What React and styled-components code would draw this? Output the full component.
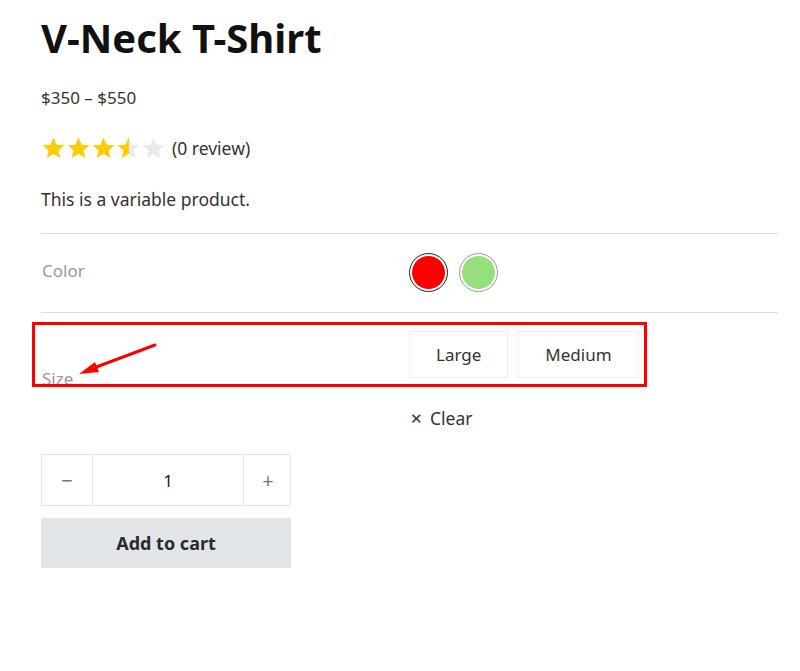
import React from "react";
import styled, { createGlobalStyle } from "styled-components";

const Global = createGlobalStyle`
  * { box-sizing: border-box; }
  body {
    margin: 0;
    background: #fff;
    font-family: "Noto Sans", "Open Sans", sans-serif;
    color: #333;
  }
`;

const Page = styled.div`
  width: 800px;
  padding: 14px 22px 0 41px;
`;

const Title = styled.h1`
  margin: 0;
  font-size: 40px;
  font-weight: 700;
  color: #111;
  line-height: 48px;
`;

const Price = styled.p`
  margin: 25px 0 0;
  font-size: 17px;
  line-height: 22px;
`;

const RatingRow = styled.div`
  display: flex;
  align-items: center;
  gap: 6px;
  margin-top: 27px;
  font-size: 17.5px;
`;

const Stars = styled.div`
  display: flex;
`;

const Desc = styled.p`
  margin: 28px 0 0;
  font-size: 17.5px;
  line-height: 22px;
`;

const Variations = styled.div`
  margin-top: 23px;
  border-top: 1px solid #ddd;
  position: relative;
`;

const VarRow = styled.div`
  display: grid;
  grid-template-columns: 368px 1fr;
  align-items: ${(p) => p.$align || "center"};
  border-bottom: ${(p) => (p.$line ? "1px solid #ddd" : "none")};
  padding: ${(p) => p.$pad};
`;

const Label = styled.div`
  color: #999;
  font-size: 17px;
  padding-left: 1px;
  line-height: 20px;
  margin-bottom: ${(p) => p.$drop || 0}px;
`;

const Options = styled.div`
  display: flex;
  gap: ${(p) => p.$gap}px;
`;

const Swatch = styled.span`
  width: 39px;
  height: 39px;
  border-radius: 50%;
  border: 1px solid ${(p) => (p.$active ? "#222" : "#999")};
  padding: 2px;
  display: flex;
  &::after {
    content: "";
    flex: 1;
    border-radius: 50%;
    background: ${(p) => p.$color};
  }
`;

const SizeBtn = styled.button`
  height: 47px;
  padding: 0 ${(p) => p.$px}px;
  background: #fff;
  border: 1px solid #eee;
  font: inherit;
  font-size: 17px;
  color: #333;
`;

const ClearRow = styled.div`
  padding: 28px 0 0 369px;
  font-size: 17.5px;
  line-height: 24px;
  display: flex;
  align-items: center;
  gap: 7px;
  color: #333;
`;

const Annot = styled.div`
  position: absolute;
  left: -9px;
  top: 88px;
  width: 615px;
  height: 65px;
  border: 3px solid #f00;
  pointer-events: none;
`;

const Arrow = styled.svg`
  position: absolute;
  left: -12px;
  top: 100px;
  pointer-events: none;
`;

const Qty = styled.div`
  display: grid;
  grid-template-columns: 50px 151px 49px;
  width: 250px;
  height: 52px;
  margin-top: 24px;
  border: 1px solid #e2e2e2;
`;

const QtyCell = styled.div`
  display: flex;
  align-items: center;
  justify-content: center;
  font-size: ${(p) => (p.$sign ? 20 : 17)}px;
  color: ${(p) => (p.$sign ? "#777" : "#222")};
  border-left: ${(p) => (p.$first ? "none" : "1px solid #e2e2e2")};
`;

const CartBtn = styled.button`
  display: block;
  width: 250px;
  height: 50px;
  margin-top: 12px;
  border: none;
  background: #e3e6e9;
  font: inherit;
  font-size: 18px;
  font-weight: 700;
  color: #2b2b2b;
`;

const Star = ({ fill }) => {
  const id = "g" + Math.random().toString(36).slice(2);
  return (
    <svg width="25" height="24" viewBox="0 0 24 24">
      <defs>
        <linearGradient id={id}>
          <stop offset={fill} stopColor="#fccb0a" />
          <stop offset={fill} stopColor="#eaeaea" />
        </linearGradient>
      </defs>
      <path
        d="M12 1.5l3.1 7.2 7.8.6-5.9 5.1 1.8 7.6L12 17.9 5.2 22l1.8-7.6L1.1 9.3l7.8-.6z"
        fill={`url(#${id})`}
      />
    </svg>
  );
};

export default function App() {
  return (
    <Page>
      <Global />
      <Title>V-Neck T-Shirt</Title>
      <Price>$350 – $550</Price>
      <RatingRow>
        <Stars>
          {[1, 1, 1, 0.5, 0].map((f, i) => (
            <Star key={i} fill={f} />
          ))}
        </Stars>
        <span>(0 review)</span>
      </RatingRow>
      <Desc>This is a variable product.</Desc>
      <Variations>
        <VarRow $line $pad="19px 0 20px">
          <Label $drop={3}>Color</Label>
          <Options $gap={11}>
            <Swatch $active $color="#ff0000" />
            <Swatch $color="#95e07c" />
          </Options>
        </VarRow>
        <VarRow $align="end" $pad="18px 0 0">
          <Label $drop={-11}>Size</Label>
          <Options $gap={10}>
            <SizeBtn $px={26}>Large</SizeBtn>
            <SizeBtn $px={26}>Medium</SizeBtn>
          </Options>
        </VarRow>
        <Annot />
        <Arrow width="140" height="50" viewBox="0 0 140 50">
          <line x1="126" y1="11" x2="62" y2="35" stroke="#f00" strokeWidth="3" strokeLinecap="round" />
          <polygon points="50,40 66,28 70,38" fill="#f00" />
        </Arrow>
      </Variations>
      <ClearRow>
        <span style={{ fontSize: 15 }}>✕</span>
        <span>Clear</span>
      </ClearRow>
      <Qty>
        <QtyCell $sign $first>−</QtyCell>
        <QtyCell>1</QtyCell>
        <QtyCell $sign>+</QtyCell>
      </Qty>
      <CartBtn>Add to cart</CartBtn>
    </Page>
  );
}
